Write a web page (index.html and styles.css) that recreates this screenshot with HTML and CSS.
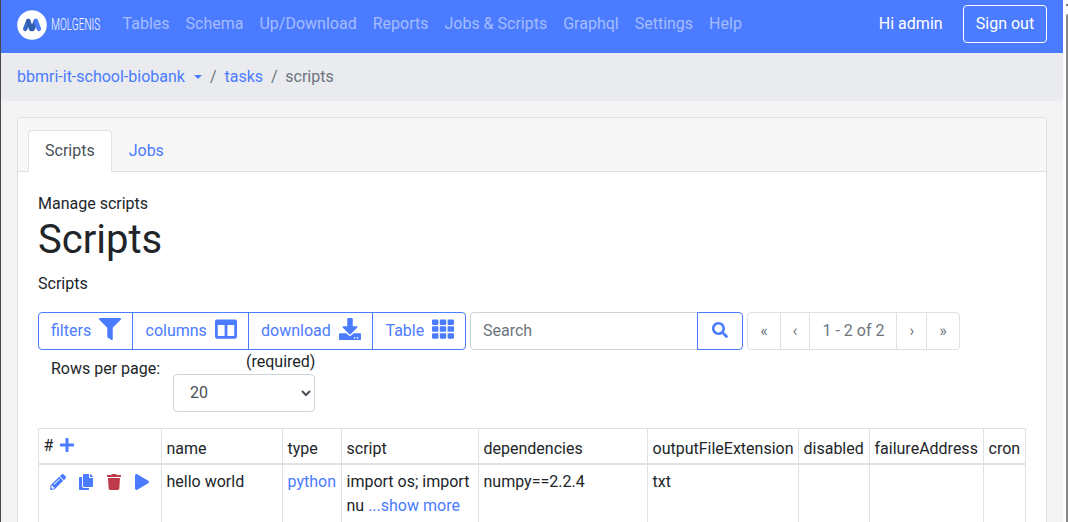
FILE: index.html
```html
<!DOCTYPE html>
<html lang="en">
<head>
<meta charset="utf-8">
<title>Scripts</title>
<link rel="stylesheet" href="styles.css">
</head>
<body>
<div class="window">
<div class="app">
  <nav class="navbar">
    <svg class="logo" width="84" height="32" viewBox="0 0 84 32">
      <circle cx="15" cy="16" r="14.8" fill="#fff"/>
      <g fill="none" stroke-width="4.400" stroke-linecap="round">
        <path d="M8.200 19.900L11.300 12.100" stroke="#3a68c8"/>
        <path d="M15.700 19.900L18.800 12.100" stroke="#2f5cae"/>
        <path d="M11.300 12.100L14.200 19.900" stroke="#2f5cae"/>
        <path d="M18.800 12.100L21.900 19.900" stroke="#4b7bff"/>
      </g>
      <text class="logo-text" transform="translate(34.300 21.400) scale(.61 1)">MOLGENIS</text>
    </svg>
    <div class="nav-links"><a>Tables</a><a>Schema</a><a>Up/Download</a><a>Reports</a><a>Jobs &amp; Scripts</a><a>Graphql</a><a>Settings</a><a>Help</a></div>
    <span class="greeting">Hi admin</span>
    <button class="sign-out">Sign out</button>
  </nav>
  <div class="breadcrumb"><a>bbmri-it-school-biobank</a><i class="caret"></i><span class="slash">/</span><a>tasks</a><span class="slash">/</span><span>scripts</span></div>
  <main class="card">
    <div class="card-header"><a class="tab active">Scripts</a><a class="tab">Jobs</a></div>
    <div class="card-body">
      <div>Manage scripts</div>
      <h1>Scripts</h1>
      <p>Scripts</p>
      <div class="toolbar">
        <div class="group">
          <button class="w-filters">filters<svg width="22" height="22" viewBox="0 0 512 512"><path d="M487.976 0H24.028C2.710 0-8.047 25.866 7.058 40.971L192 225.941V432c0 7.831 3.821 15.170 10.237 19.662l80 55.980C298.020 518.690 320 507.493 320 487.980V225.941l184.947-184.970C520.021 25.896 509.338 0 487.976 0z"/></svg></button>
          <button class="w-columns">columns<svg width="22" height="22" viewBox="0 0 512 512"><path d="M464 32H48C21.490 32 0 53.490 0 80v352c0 26.510 21.490 48 48 48h416c26.510 0 48-21.490 48-48V80c0-26.510-21.490-48-48-48zM224 416H64V160h160v256zm224 0H288V160h160v256z"/></svg></button>
          <button class="w-download">download<svg width="22" height="22" viewBox="0 0 512 512"><path d="M216 0h80c13.300 0 24 10.700 24 24v168h87.700c17.800 0 26.700 21.500 14.100 34.100L269.700 378.300c-7.500 7.500-19.800 7.500-27.300 0L90.100 226.100c-12.600-12.600-3.700-34.100 14.100-34.100H192V24c0-13.300 10.700-24 24-24zm296 376v112c0 13.300-10.700 24-24 24H24c-13.300 0-24-10.700-24-24V376c0-13.300 10.700-24 24-24h146.700l49 49c20.100 20.100 52.500 20.100 72.600 0l49-49H488c13.300 0 24 10.700 24 24zm-124 88c0-11-9-20-20-20s-20 9-20 20 9 20 20 20 20-9 20-20zm64 0c0-11-9-20-20-20s-20 9-20 20 9 20 20 20 20-9 20-20z"/></svg></button>
          <button class="w-table">Table<svg width="22" height="22" viewBox="0 0 512 512"><path d="M149.333 56v80c0 13.255-10.745 24-24 24H24c-13.255 0-24-10.745-24-24V56c0-13.255 10.745-24 24-24h101.333c13.255 0 24 10.745 24 24zm181.334 240v-80c0-13.255-10.745-24-24-24H205.333c-13.255 0-24 10.745-24 24v80c0 13.255 10.745 24 24 24h101.333c13.256 0 24.001-10.745 24.001-24zm32-240v80c0 13.255 10.745 24 24 24H488c13.255 0 24-10.745 24-24V56c0-13.255-10.745-24-24-24H386.667c-13.255 0-24 10.745-24 24zm-32 80V56c0-13.255-10.745-24-24-24H205.333c-13.255 0-24 10.745-24 24v80c0 13.255 10.745 24 24 24h101.333c13.256 0 24.001-10.745 24.001-24zm-205.334 56H24c-13.255 0-24 10.745-24 24v80c0 13.255 10.745 24 24 24h101.333c13.255 0 24-10.745 24-24v-80c0-13.255-10.745-24-24-24zM0 376v80c0 13.255 10.745 24 24 24h101.333c13.255 0 24-10.745 24-24v-80c0-13.255-10.745-24-24-24H24c-13.255 0-24 10.745-24 24zm386.667-56H488c13.255 0 24-10.745 24-24v-80c0-13.255-10.745-24-24-24H386.667c-13.255 0-24 10.745-24 24v80c0 13.255 10.745 24 24 24zm0 160H488c13.255 0 24-10.745 24-24v-80c0-13.255-10.745-24-24-24H386.667c-13.255 0-24 10.745-24 24v80c0 13.255 10.745 24 24 24zM181.333 376v80c0 13.255 10.745 24 24 24h101.333c13.255 0 24-10.745 24-24v-80c0-13.255-10.745-24-24-24H205.333c-13.255 0-24 10.745-24 24z"/></svg></button>
        </div>
        <div class="search"><input type="text" placeholder="Search"><button><svg width="16" height="16" viewBox="0 0 512 512"><path d="M505 442.700L405.300 343c-4.500-4.500-10.600-7-17-7H372c27.600-35.300 44-79.700 44-128C416 93.100 322.900 0 208 0S0 93.100 0 208s93.100 208 208 208c48.300 0 92.700-16.400 128-44v16.300c0 6.400 2.500 12.500 7 17l99.700 99.700c9.400 9.400 24.600 9.400 33.900 0l28.300-28.300c9.400-9.400 9.400-24.600.1-34zM208 336c-70.700 0-128-57.200-128-128 0-70.700 57.200-128 128-128 70.700 0 128 57.200 128 128 0 70.700-57.200 128-128 128z"/></svg></button></div>
        <div class="pages"><span class="p1">«</span><span class="p2">‹</span><span class="p3">1 - 2 of 2</span><span class="p4">›</span><span class="p5">»</span></div>
      </div>
      <div class="page-size">
        <label>Rows per page:</label>
        <div class="select-field"><div class="required">(required)</div><select><option>20</option></select></div>
      </div>
      <table>
        <colgroup><col class="c-actions"><col class="c-name"><col class="c-type"><col class="c-script"><col class="c-deps"><col class="c-ext"><col class="c-disabled"><col class="c-failure"><col class="c-cron"></colgroup>
        <thead><tr>
          <th class="first"><div class="add-cell">#<svg width="14" height="16" viewBox="0 0 448 512"><path d="M416 208H272V64c0-17.670-14.330-32-32-32h-32c-17.670 0-32 14.330-32 32v144H32c-17.670 0-32 14.330-32 32v32c0 17.670 14.330 32 32 32h144v144c0 17.670 14.330 32 32 32h32c17.670 0 32-14.330 32-32V304h144c17.670 0 32-14.330 32-32v-32c0-17.670-14.330-32-32-32z"/></svg></div></th>
          <th>name</th><th>type</th><th>script</th><th>dependencies</th><th>outputFileExtension</th><th>disabled</th><th>failureAddress</th><th>cron</th>
        </tr></thead>
        <tbody><tr>
          <td><div class="actions">
            <svg width="16" height="16" viewBox="0 0 512 512"><path d="M497.900 142.100l-46.100 46.100c-4.700 4.700-12.300 4.700-17 0l-111-111c-4.700-4.700-4.700-12.300 0-17l46.100-46.100c18.700-18.700 49.100-18.700 67.900 0l60.100 60.100c18.800 18.700 18.800 49.100 0 67.900zM284.200 99.800L21.600 362.400.4 483.900c-2.900 16.400 11.400 30.600 27.800 27.800l121.500-21.300 262.600-262.600c4.700-4.700 4.700-12.300 0-17l-111-111c-4.800-4.700-12.400-4.700-17.100 0zM124.100 339.900c-5.500-5.500-5.500-14.300 0-19.800l154-154c5.500-5.500 14.300-5.500 19.800 0s5.500 14.300 0 19.800l-154 154c-5.500 5.500-14.300 5.500-19.800 0zM88 424h48v36.300l-64.500 11.300-31.100-31.100L51.700 376H88v48z"/></svg>
            <svg width="14" height="16" viewBox="0 0 448 512"><path d="M320 448v40c0 13.255-10.745 24-24 24H24c-13.255 0-24-10.745-24-24V120c0-13.255 10.745-24 24-24h72v296c0 30.879 25.121 56 56 56h168zm0-344V0H152c-13.255 0-24 10.745-24 24v368c0 13.255 10.745 24 24 24h272c13.255 0 24-10.745 24-24V128H344c-13.200 0-24-10.800-24-24zm120.971-31.029L375.029 7.029A24 24 0 0 0 358.059 0H352v96h96v-6.059a24 24 0 0 0-7.029-16.970z"/></svg>
            <svg class="danger" width="14" height="16" viewBox="0 0 448 512"><path d="M432 32H312l-9.400-18.700A24 24 0 0 0 281.100 0H166.800a23.720 23.720 0 0 0-21.400 13.300L136 32H16A16 16 0 0 0 0 48v32a16 16 0 0 0 16 16h416a16 16 0 0 0 16-16V48a16 16 0 0 0-16-16zM53.200 467a48 48 0 0 0 47.900 45h245.800a48 48 0 0 0 47.900-45L416 128H32z"/></svg>
            <svg width="14" height="16" viewBox="0 0 448 512"><path d="M424.400 214.700L72.400 6.600C43.800-10.300 0 6.100 0 47.900V464c0 37.500 40.700 60.100 72.400 41.300l352-208c31.400-18.500 31.500-64.100 0-82.600z"/></svg>
          </div></td>
          <td>hello world</td><td><a>python</a></td><td><span>import os; import</span><br><span>nu</span> <a>...show more</a></td><td>numpy==2.2.4</td><td>txt</td><td></td><td></td><td></td>
        </tr></tbody>
      </table>
    </div>
  </main>
</div>
<div class="scrollbar"><i class="arrow"></i><i class="thumb"></i></div>
</div>
</body>
</html>
```

FILE: styles.css
```css
* { box-sizing: border-box; }
body { margin: 0; overflow: hidden; background: #f4f4f4; color: #212529; font: 16px/24px Roboto, sans-serif; }
button, input, select { font: inherit; margin: 0; }
a { color: #4b7bff; }
svg { fill: #4b7bff; flex: none; }
.window { display: flex; height: 522px; overflow: hidden; border-left: 1px solid #48484c; }
.app { width: 1062px; flex: none; }

.navbar { display: flex; align-items: center; height: 53px; padding: 0 16px 5px; background: #4b7bff; }
.logo { margin-top: 1px; }
.logo-text { font: 300 16.5px Roboto, sans-serif; fill: #fff; }
.nav-links { display: flex; gap: 16px; margin-left: 21.6px; flex: 1; }
.nav-links a { color: rgba(255, 255, 255, .5); }
.greeting { color: #fff; margin-right: 20.4px; }
.sign-out { width: 84px; height: 38px; padding: 0; background: none; color: #fff; border: 1px solid #fff; border-radius: 4px; }

.breadcrumb { display: flex; align-items: center; height: 48px; padding: 0 16px; background: #e9ebef; color: #6c757d; border-radius: 0 0 4px 4px; }
.caret { margin: 0 8px 0 9px; border: 4px solid transparent; border-top-color: #4b7bff; border-bottom: 0; }
.slash + a, .slash + span { margin-left: 8px; }
a + .slash { margin-left: 8px; }
.slash + span { margin-left: 7.6px; }

.card { margin: 16px 16px 0; height: 500px; background: #fff; border: 1px solid #dfdfdf; border-radius: 4px; }
.card-header { display: flex; height: 54px; padding: 12px 10px 0; background: #f7f7f7; border-bottom: 1px solid #dfdfdf; border-radius: 3px 3px 0 0; }
.tab { height: 42px; padding: 8px 16px; border: 1px solid transparent; }
.tab.active { color: #495057; background: #fff; border-color: #dee2e6 #dee2e6 #fff; border-radius: 4px 4px 0 0; }
.card-body { padding: 20px; }
h1 { margin: 0 0 8px; font-size: 40px; font-weight: 400; line-height: 48px; }
p { margin: 0 0 16px; }

.toolbar { display: flex; height: 38px; }
.group { display: flex; }
.group button { display: flex; align-items: center; justify-content: space-between; padding: 0 11px 0 12px; margin-left: -1px; color: #4b7bff; background: #fff; border: 1px solid #4b7bff; }
.group button svg { margin-top: -4px; }
.group button:first-child { margin-left: 0; border-radius: 4px 0 0 4px; }
.group button:last-child { border-radius: 0 4px 4px 0; }
.group .w-filters { width: 95px; }
.group .w-columns { width: 117px; padding: 0 11.5px 0 12.5px; }
.group .w-download { width: 125px; padding-right: 11.5px; }
.group .w-table { width: 94px; padding: 0 11.5px 0 12.5px; }
.search { display: flex; margin-left: 4px; }
.search input { width: 228px; padding: 6px 12px; border: 1px solid #ced4da; border-radius: 4px 0 0 4px; }
.search input::placeholder { color: #6c757d; opacity: 1; }
.search button { display: flex; align-items: center; justify-content: center; width: 46px; margin-left: -1px; padding: 0 0 2px; background: #fff; border: 1px solid #4b7bff; border-radius: 0 4px 4px 0; }
.pages { display: flex; margin-left: 4px; border: 1px solid #dee2e6; border-radius: 4px; color: #6c757d; text-align: center; line-height: 36px; }
.pages span + span { border-left: 1px solid #dee2e6; }
.p1 { width: 32px; }
.p2 { width: 29px; }
.p3 { width: 87px; padding-left: 1px; }
.p4 { width: 30px; padding-left: 1px; }
.p5 { width: 33px; }

.page-size { display: flex; height: 78px; padding-left: 13px; }
.page-size label { width: 122px; padding-top: 7px; }
.required { text-align: right; margin-right: -.4px; }
.page-size select { display: block; width: 142px; height: 38px; padding: 5px 12px 7px; color: #495057; background: #fff; border: 1px solid #ced4da; border-radius: 4px; }

table { width: 988px; table-layout: fixed; border-collapse: collapse; }
th, td { padding: 5px 4px 0 4.5px; border: 1px solid #dee2e6; text-align: left; font-weight: 400; vertical-align: top; }
th { height: 35px; padding-top: 8px; border-bottom-width: 2px; white-space: nowrap; }
th.first { padding-top: 5px; }
td { height: 80px; }
.c-actions { width: 123px; }
.c-name { width: 121px; }
.c-type { width: 59px; }
.c-script { width: 137px; }
.c-deps { width: 169px; }
.c-ext { width: 151px; }
.c-disabled { width: 71px; }
.c-failure { width: 114px; }
.c-cron { width: 42px; }
.add-cell { display: flex; align-items: center; gap: 7px; }
.add-cell svg { margin-top: -2px; }
.actions { display: flex; align-items: center; gap: 14px; height: 24px; padding-left: 6px; }
.actions svg:first-child { margin-right: -1px; }
.danger { fill: #bf3a48; }

.scrollbar { width: 5px; flex: none; background: #fcfcfc; display: flex; flex-direction: column; align-items: flex-end; }
.arrow { width: 2px; height: 2px; margin-top: 4px; background: #77777a; }
.thumb { width: 2px; height: 508px; margin-top: 8px; background: #88888a; border-radius: 2px 0 0 0; }
```
